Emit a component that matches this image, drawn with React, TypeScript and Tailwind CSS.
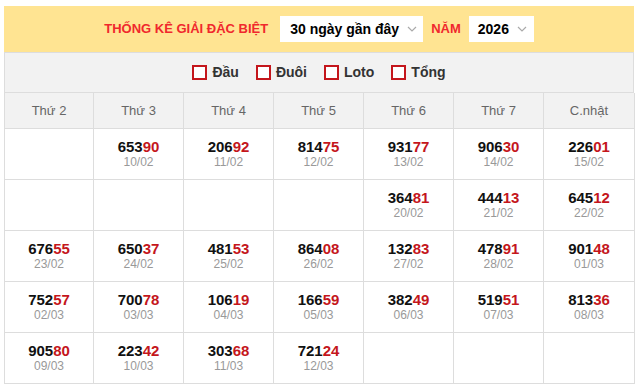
const rows: ([string, string] | null)[][] = [
  [null, ['65390', '10/02'], ['20692', '11/02'], ['81475', '12/02'], ['93177', '13/02'], ['90630', '14/02'], ['22601', '15/02']],
  [null, null, null, null, ['36481', '20/02'], ['44413', '21/02'], ['64512', '22/02']],
  [['67655', '23/02'], ['65037', '24/02'], ['48153', '25/02'], ['86408', '26/02'], ['13283', '27/02'], ['47891', '28/02'], ['90148', '01/03']],
  [['75257', '02/03'], ['70078', '03/03'], ['10619', '04/03'], ['16659', '05/03'], ['38249', '06/03'], ['51951', '07/03'], ['81336', '08/03']],
  [['90580', '09/03'], ['22342', '10/03'], ['30368', '11/03'], ['72124', '12/03'], null, null, null],
]

const days = ['Thứ 2', 'Thứ 3', 'Thứ 4', 'Thứ 5', 'Thứ 6', 'Thứ 7', 'C.nhật']
const filters = ['Đầu', 'Đuôi', 'Loto', 'Tổng']

function Chevron() {
  return (
    <svg width="10" height="6" viewBox="0 0 10 6" className="ml-2">
      <path d="M1 1l4 4 4-4" fill="none" stroke="#aaa" strokeWidth="1.2" />
    </svg>
  )
}

export default function App() {
  return (
    <div className="min-h-screen bg-white pt-[6px] font-['Liberation_Sans',Arial,sans-serif]">
      <div className="ml-[4px] w-[630px]">
        {/* Header */}
        <div className="flex h-[46px] items-center justify-center bg-[#ffe492]">
          <span className="mr-[12px] text-[13px] font-bold text-[#f0282d]">THỐNG KÊ GIẢI ĐẶC BIỆT</span>
          <div className="flex h-[26px] w-[143px] items-center bg-white pl-[10px] text-[14px] font-bold text-black">
            30 ngày gần đây
            <Chevron />
          </div>
          <span className="mx-[8px] text-[13px] font-bold text-[#f0282d]">NĂM</span>
          <div className="flex h-[26px] w-[65px] items-center bg-white pl-[9px] text-[14px] font-bold text-black">
            2026
            <Chevron />
          </div>
        </div>

        {/* Filters */}
        <div className="flex h-[40px] items-center justify-center gap-[17px] border-x border-t border-[#ddd] bg-[#f2f2f2]">
          {filters.map((f) => (
            <label key={f} className="flex items-center gap-[5px] text-[14px] font-bold text-[#333]">
              <span className="h-[15px] w-[15px] border-2 border-[#c4161c] bg-white" />
              {f}
            </label>
          ))}
        </div>

        {/* Table */}
        <div className="grid grid-cols-[89px_90px_90px_90px_90px_90px_91px] border-l border-t border-[#ddd]">
          {days.map((d) => (
            <div
              key={d}
              className="flex h-[36px] items-center justify-center border-b border-r border-[#ddd] bg-[#f2f2f2] text-[13px] text-[#666]"
            >
              {d}
            </div>
          ))}
          {rows.flat().map((c, i) => (
            <div
              key={i}
              className="flex h-[51px] flex-col items-center justify-center border-b border-r border-[#ddd] bg-white"
            >
              {c && (
                <>
                  <div className="text-[15px] font-bold leading-[17px] text-[#111]">
                    {c[0].slice(0, 3)}
                    <span className="text-[#c4161c]">{c[0].slice(3)}</span>
                  </div>
                  <div className="text-[12px] leading-[15px] text-[#999]">{c[1]}</div>
                </>
              )}
            </div>
          ))}
        </div>
      </div>
    </div>
  )
}
